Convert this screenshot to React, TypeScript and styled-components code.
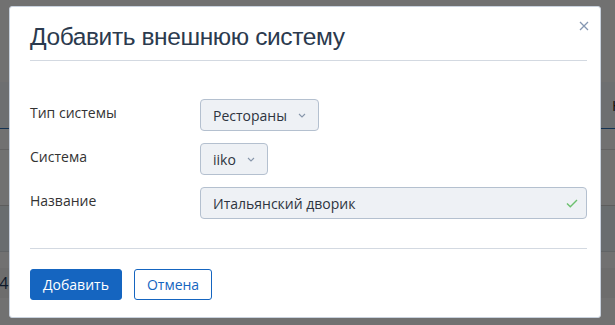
import React from "react";
import styled, { createGlobalStyle } from "styled-components";

const Global = createGlobalStyle`
  html, body { margin: 0; padding: 0; }
  body { width: 615px; height: 325px; overflow: hidden; font-family: "Open Sans", "Noto Sans", sans-serif; }
  * { box-sizing: border-box; }
`;

const Page = styled.div`
  position: relative;
  width: 615px;
  height: 325px;
  background: #fafafa;
  display: flex;
  flex-direction: column;
  overflow: hidden;
`;

const BgRow = styled.div<{ $h: number; $bg: string; $line?: string }>`
  height: ${(p) => p.$h}px;
  background: ${(p) => p.$bg};
  border-bottom: 1px solid ${(p) => p.$line || "transparent"};
  display: flex;
  align-items: center;
  justify-content: space-between;
  font-family: "Open Sans", sans-serif;
  font-size: 16px;
  color: #1e3a5f;
  flex-shrink: 0;
`;

const BgText = styled.span`
  margin-left: -6px;
`;

const BgTextRight = styled.span`
  margin-right: -8px;
  font-size: 15px;
  color: #222;
`;

const Overlay = styled.div`
  position: absolute;
  inset: 0;
  background: rgba(0, 0, 0, 0.55);
`;

const Modal = styled.div`
  position: absolute;
  left: 9px;
  top: 6px;
  width: 592px;
  height: 312px;
  background: #fff;
  border: 1px solid #c9d2de;
  border-radius: 3px;
  padding: 0 13px 0 20px;
  display: flex;
  flex-direction: column;
`;

const Close = styled.button`
  position: absolute;
  right: 8px;
  top: 11px;
  width: 16px;
  height: 16px;
  padding: 0;
  border: none;
  background: none;
  display: flex;
  align-items: center;
  justify-content: center;
  cursor: pointer;
`;

const Header = styled.div`
  padding-top: 15px;
  height: 54px;
  border-bottom: 1px solid #d3d9e1;
`;

const Title = styled.h2`
  margin: 0;
  font-family: "Liberation Sans", Arial, sans-serif;
  font-weight: 400;
  font-size: 24.5px;
  line-height: 30px;
  color: #2b3a4e;
  letter-spacing: -0.4px;
`;

const Body = styled.div`
  padding: 38px 0 29px;
  display: flex;
  flex-direction: column;
  gap: 12px;
  border-bottom: 1px solid #d3d9e1;
`;

const Row = styled.div`
  display: grid;
  grid-template-columns: 170px 1fr;
  align-items: center;
`;

const Label = styled.label`
  font-size: 14px;
  color: #333;
  line-height: 20px;
  margin-top: -4px;
`;

const Select = styled.div`
  justify-self: start;
  height: 32px;
  padding: 0 12px 0 12px;
  display: flex;
  align-items: center;
  gap: 11px;
  background: #eef1f5;
  border: 1px solid #b4c0cf;
  border-radius: 4px;
  font-size: 14px;
  color: #2d3440;
`;

const Input = styled.div`
  height: 32px;
  padding: 0 8px 0 12px;
  display: flex;
  align-items: center;
  justify-content: space-between;
  background: #eef1f5;
  border: 1px solid #b4c0cf;
  border-radius: 4px;
  font-size: 14px;
  color: #2d3440;
`;

const Footer = styled.div`
  padding-top: 20px;
  display: flex;
  gap: 12px;
`;

const Button = styled.button<{ $primary?: boolean }>`
  height: 31px;
  padding: 0 12px;
  border-radius: 3px;
  font-family: "Open Sans", sans-serif;
  font-size: 14px;
  border: 1px solid #1565c0;
  background: ${(p) => (p.$primary ? "#1565c0" : "#fff")};
  color: ${(p) => (p.$primary ? "#fff" : "#1565c0")};
  cursor: pointer;
`;

const Chevron = () => (
  <svg width="8" height="5" viewBox="0 0 8 5" fill="none">
    <path d="M1 1l3 3 3-3" stroke="#8796aa" strokeWidth="1.1" />
  </svg>
);

export default function App() {
  return (
    <>
      <Global />
      <Page>
        <BgRow $h={82} $bg="#fbfbfb" />
        <BgRow $h={47} $bg="#f1f6fa" $line="#2a6fb8">
          <span />
          <BgTextRight>Н</BgTextRight>
        </BgRow>
        <BgRow $h={21} $bg="#fbfbfb" $line="#dcdcdc" />
        <BgRow $h={56} $bg="#fbfbfb" $line="#cfcfcf" />
        <BgRow $h={46} $bg="#e9f1f7" $line="#d8dde2" />
        <BgRow $h={16} $bg="#fbfbfb" />
        <BgRow $h={30} $bg="#f2f2f2">
          <BgText>-4</BgText>
        </BgRow>
        <BgRow $h={30} $bg="#fbfbfb" />
        <Overlay />
        <Modal>
          <Close aria-label="Закрыть">
            <svg width="10" height="10" viewBox="0 0 10 10">
              <path d="M1 1l8 8M9 1l-8 8" stroke="#8597b2" strokeWidth="1.3" />
            </svg>
          </Close>
          <Header>
            <Title>Добавить внешнюю систему</Title>
          </Header>
          <Body>
            <Row>
              <Label>Тип системы</Label>
              <Select>
                Рестораны <Chevron />
              </Select>
            </Row>
            <Row>
              <Label>Система</Label>
              <Select>
                iiko <Chevron />
              </Select>
            </Row>
            <Row>
              <Label>Название</Label>
              <Input>
                Итальянский дворик
                <svg width="12" height="9" viewBox="0 0 12 9" fill="none">
                  <path d="M1 4.5l3.3 3.3L11 1" stroke="#6cc06e" strokeWidth="1.4" />
                </svg>
              </Input>
            </Row>
          </Body>
          <Footer>
            <Button $primary>Добавить</Button>
            <Button>Отмена</Button>
          </Footer>
        </Modal>
      </Page>
    </>
  );
}
